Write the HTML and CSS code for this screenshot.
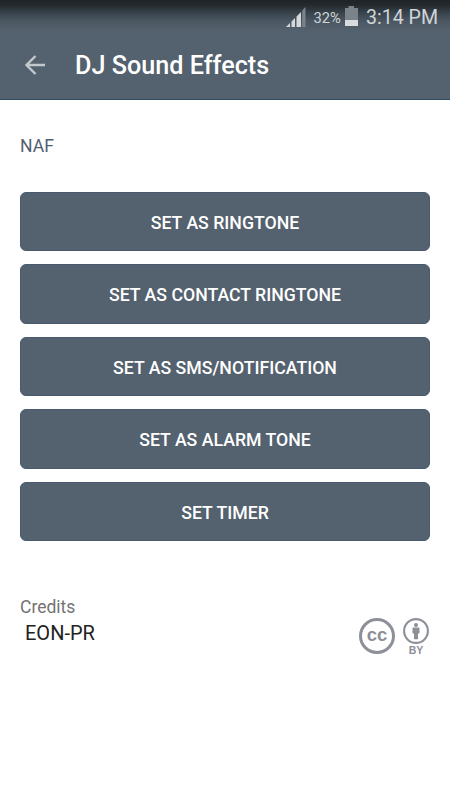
FILE: index.html
```html
<!DOCTYPE html>
<html lang="en">
<head>
    <meta charset="UTF-8">
    <meta name="viewport" content="width=device-width, initial-scale=1.0">
    <title>DJ Sound Effects</title>
    <link rel="stylesheet" href="styles.css">
</head>
<body>
    <header>
        <div class="status-bar">
            <svg class="signal" width="20" height="20" viewBox="0 0 20 20">
                <path d="M0 20L4 16V20ZM5.5 20V14.5L9 11V20ZM10.5 20V9.5L15 5V20Z" fill="#d5d8db"/>
                <path d="M16.2 20V3.5L19.5 0V20Z" fill="#7b838a"/>
            </svg>
            <span class="percent">32%</span>
            <svg class="battery" width="13" height="20" viewBox="0 0 13 20">
                <path d="M0 2H3.5V0H9V2H13V20H0Z" fill="#7b838a"/>
                <path d="M0 14H13V20H0Z" fill="#d9dcde"/>
            </svg>
            <span class="time">3:14 PM</span>
        </div>
        <div class="toolbar">
            <svg class="back" width="20" height="20" viewBox="0 0 20 20">
                <path d="M20 10H2M10.5 1L1.5 10L10.5 19" fill="none" stroke="#c3c8cd" stroke-width="2.4"/>
            </svg>
            <h1>DJ Sound Effects</h1>
        </div>
    </header>

    <main>
        <h2>NAF</h2>
        <div class="actions">
            <button type="button">SET AS RINGTONE</button>
            <button type="button">SET AS CONTACT RINGTONE</button>
            <button type="button">SET AS SMS/NOTIFICATION</button>
            <button type="button">SET AS ALARM TONE</button>
            <button type="button">SET TIMER</button>
        </div>

        <div class="credits">
            <div>
                <p class="label">Credits</p>
                <p class="author">EON-PR</p>
            </div>
            <div class="license">
                <div class="cc"><span>c</span><span>c</span></div>
                <div class="by">
                    <svg width="26" height="26" viewBox="0 0 26 26">
                        <circle cx="13" cy="13" r="11.9" fill="none" stroke="#8d8f99" stroke-width="2.1"/>
                        <circle cx="13" cy="6.9" r="2" fill="#8d8f99"/>
                        <path d="M10.4 9.5H15.6Q16.5 9.5 16.5 10.4V15.5H15V21.3H11V15.5H9.5V10.4Q9.5 9.5 10.4 9.5Z" fill="#8d8f99"/>
                    </svg>
                    <span>BY</span>
                </div>
            </div>
        </div>
    </main>
</body>
</html>
```

FILE: styles.css
```css
* {
    box-sizing: border-box;
}

body {
    font-family: Roboto, sans-serif;
    margin: 0;
    padding: 0;
    background-color: #fff;
}

header {
    height: 100px;
    background: linear-gradient(#1f2428 0, #21272b 4px, #3b464f 14px, #4c5964 22px, #54616e 31px);
    border-bottom: 1px solid #344a61;
}

.status-bar {
    display: flex;
    justify-content: flex-end;
    height: 35px;
    padding-right: 12px;
    color: #d0d4d7;
}

.signal {
    margin-top: 7px;
}

.percent {
    margin: 0 4px 0 8px;
    font-size: 14.7px;
    line-height: 36px;
}

.battery {
    margin-top: 6px;
}

.time {
    margin-left: 8px;
    font-size: 19.6px;
    line-height: 36px;
}

.toolbar {
    display: flex;
    align-items: center;
    height: 60px;
    padding-left: 25px;
}

h1 {
    margin: 0 0 0 30px;
    padding-top: 2px;
    font-size: 25.2px;
    font-weight: 500;
    line-height: 30px;
    color: #fff;
}

main {
    padding: 35px 20px 0;
}

h2 {
    margin: 0;
    font-size: 17.6px;
    font-weight: 400;
    line-height: 22px;
    color: #515e70;
}

.actions {
    display: flex;
    flex-direction: column;
    gap: 12.6px;
    margin-top: 34.6px;
}

button {
    height: 59.9px;
    padding: 2.4px 0 0;
    background-color: #54616e;
    border: 1px solid #485a6d;
    border-radius: 6px;
    font-family: inherit;
    font-size: 17.7px;
    font-weight: 500;
    color: #fff;
}

.credits {
    display: flex;
    justify-content: space-between;
    margin-top: 55px;
}

.credits p {
    margin: 0;
}

.label {
    font-size: 17.5px;
    line-height: 23px;
    color: #737373;
}

.author {
    padding-left: 5px;
    font-size: 20px;
    line-height: 28px;
    color: #222;
}

.license {
    display: flex;
    gap: 8px;
    margin: 22px 1px 0 0;
    color: #8d8f99;
}

.cc {
    display: flex;
    justify-content: center;
    width: 36px;
    height: 36px;
    border: 3px solid #8d8f99;
    border-radius: 50%;
    font-family: "Liberation Sans", sans-serif;
    font-size: 18.5px;
    font-weight: 700;
    line-height: 27px;
}

.by {
    display: flex;
    flex-direction: column;
    align-items: center;
    width: 26px;
}

.by span {
    font-family: "Liberation Sans", sans-serif;
    font-size: 10.5px;
    font-weight: 700;
    line-height: 12px;
}
```
